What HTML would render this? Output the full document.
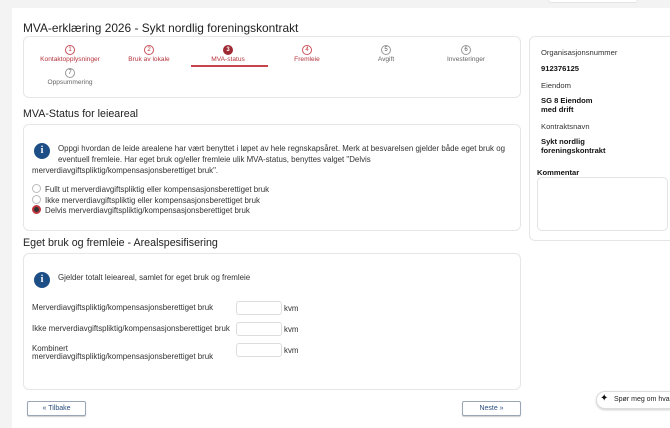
<!DOCTYPE html>
<html><head><meta charset="utf-8"><style>
*{box-sizing:border-box;margin:0;padding:0}
body{width:670px;height:417px;overflow:hidden;background:#f3f3f3;font-family:"Liberation Sans",sans-serif;color:#222;position:relative}
.a{position:absolute;white-space:nowrap}
.main{position:absolute;left:12px;top:8px;width:700px;height:420px;background:#fff}
.card{position:absolute;border:1px solid #e6e6e6;border-radius:6px;background:#fff}
.step{position:absolute;width:90px;text-align:center;font-size:6.6px;color:#b4343d}
.step .c{width:10px;height:10px;border:1px solid #c9515a;border-radius:50%;margin:0 auto 1px;font-size:6px;line-height:8px;color:#b4343d}
.step.g{color:#666}.step.g .c{border-color:#999;color:#555}
.step.act .c{background:#9e2a33;border-color:#9e2a33;color:#fff;font-weight:bold}
.info{position:absolute;width:16px;height:16px;border-radius:50%;background:#1d4f86;color:#fff;font:bold 10px "Liberation Serif",serif;text-align:center;line-height:16px}
.t{font-size:7.9px;color:#333}
.radio{position:absolute;width:9px;height:9px;border-radius:50%;border:1px solid #bbb;background:#fff}
.inp{position:absolute;width:46px;height:14px;border:1px solid #ddd;border-radius:3px;background:#fff}
.btn{position:absolute;width:59px;height:15px;border:1px solid #9aa6b6;border-radius:2px;background:#fff;font-size:7px;color:#2b4e7e;text-align:center;line-height:13px;box-shadow:0 1px 1px #ccc}
.r{font-size:7.6px;color:#333}
.rb{font-size:7.6px;font-weight:bold;color:#111;line-height:9px}
</style></head><body>
<div class="a" style="left:548px;top:-4px;width:90px;height:7px;background:#fff;border:1px solid #e5e5e5;border-radius:3px"></div>
<div class="main"></div>
<div class="a" style="left:23px;top:21px;font-size:11.9px;color:#222">MVA-erklæring 2026 - Sykt nordlig foreningskontrakt</div>

<div class="card" style="left:23px;top:36px;width:498px;height:62px"></div>
<div class="step" style="left:25px;top:45px"><div class="c">1</div>Kontaktopplysninger</div>
<div class="step" style="left:104px;top:45px"><div class="c">2</div>Bruk av lokale</div>
<div class="step act" style="left:183px;top:45px"><div class="c">3</div>MVA-status</div>
<div class="a" style="left:191px;top:65px;width:77px;height:1.5px;background:#c9434c"></div>
<div class="step" style="left:262px;top:45px"><div class="c">4</div>Fremleie</div>
<div class="step g" style="left:341px;top:45px"><div class="c">5</div>Avgift</div>
<div class="step g" style="left:421px;top:45px"><div class="c">6</div>Investeringer</div>
<div class="step g" style="left:25px;top:68px"><div class="c">7</div>Oppsummering</div>

<div class="a" style="left:23px;top:108px;font-size:10.7px">MVA-Status for leieareal</div>
<div class="card" style="left:23px;top:124px;width:498px;height:107px"></div>
<div class="info" style="left:34px;top:143px">i</div>
<div class="a t" style="left:58px;top:144px">Oppgi hvordan de leide arealene har vært benyttet i løpet av hele regnskapsåret. Merk at besvarelsen gjelder både eget bruk og</div>
<div class="a t" style="left:58px;top:155px">eventuell fremleie. Har eget bruk og/eller fremleie ulik MVA-status, benyttes valget "Delvis</div>
<div class="a t" style="left:32px;top:166px">merverdiavgiftspliktig/kompensasjonsberettiget bruk".</div>
<div class="radio" style="left:32px;top:184px"></div><div class="a t" style="left:45px;top:185px">Fullt ut merverdiavgiftspliktig eller kompensasjonsberettiget bruk</div>
<div class="radio" style="left:32px;top:195px"></div><div class="a t" style="left:45px;top:196px">Ikke merverdiavgiftspliktig eller kompensasjonsberettiget bruk</div>
<div class="radio" style="left:32px;top:205px;background:#333;border:2px solid #c0353e"></div><div class="a t" style="left:45px;top:206px">Delvis merverdiavgiftspliktig/kompensasjonsberettiget bruk</div>

<div class="a" style="left:23px;top:237px;font-size:10.7px">Eget bruk og fremleie - Arealspesifisering</div>
<div class="card" style="left:23px;top:253px;width:498px;height:137px"></div>
<div class="info" style="left:34px;top:272px">i</div>
<div class="a t" style="left:58px;top:273px">Gjelder totalt leieareal, samlet for eget bruk og fremleie</div>
<div class="a t" style="left:32px;top:303px">Merverdiavgiftspliktig/kompensasjonsberettiget bruk</div>
<div class="inp" style="left:236px;top:301px"></div><div class="a t" style="left:284px;top:304px">kvm</div>
<div class="a t" style="left:32px;top:324px">Ikke merverdiavgiftspliktig/kompensasjonsberettiget bruk</div>
<div class="inp" style="left:236px;top:322px"></div><div class="a t" style="left:284px;top:325px">kvm</div>
<div class="a t" style="left:32px;top:344px">Kombinert</div>
<div class="a t" style="left:32px;top:352px">merverdiavgiftspliktig/kompensasjonsberettiget bruk</div>
<div class="inp" style="left:236px;top:343px"></div><div class="a t" style="left:284px;top:346px">kvm</div>

<div class="btn" style="left:27px;top:401px">« Tilbake</div>
<div class="btn" style="left:462px;top:401px">Neste »</div>

<div class="card" style="left:529px;top:36px;width:160px;height:205px"></div>
<div class="a r" style="left:541px;top:48px">Organisasjonsnummer</div>
<div class="a rb" style="left:541px;top:64px">912376125</div>
<div class="a r" style="left:541px;top:81px">Eiendom</div>
<div class="a rb" style="left:541px;top:96px">SG 8 Eiendom<br>med drift</div>
<div class="a r" style="left:541px;top:122px">Kontraktsnavn</div>
<div class="a rb" style="left:541px;top:137px">Sykt nordlig<br>foreningskontrakt</div>
<div class="a rb" style="left:537px;top:168px">Kommentar</div>
<div class="a" style="left:537px;top:177px;width:131px;height:54px;border:1px solid #e3e3e3;border-radius:5px;background:#fff"></div>

<div class="a" style="left:596px;top:391px;width:90px;height:18px;border:1px solid #ddd;border-radius:9px;background:#fff;box-shadow:0 1px 2px #ccc;font-size:7px;line-height:16px;padding-left:17px;color:#222">Spør meg om hva s</div>
<div class="a" style="left:600px;top:393px;font-size:10px;color:#111">✦</div>
</body></html>
